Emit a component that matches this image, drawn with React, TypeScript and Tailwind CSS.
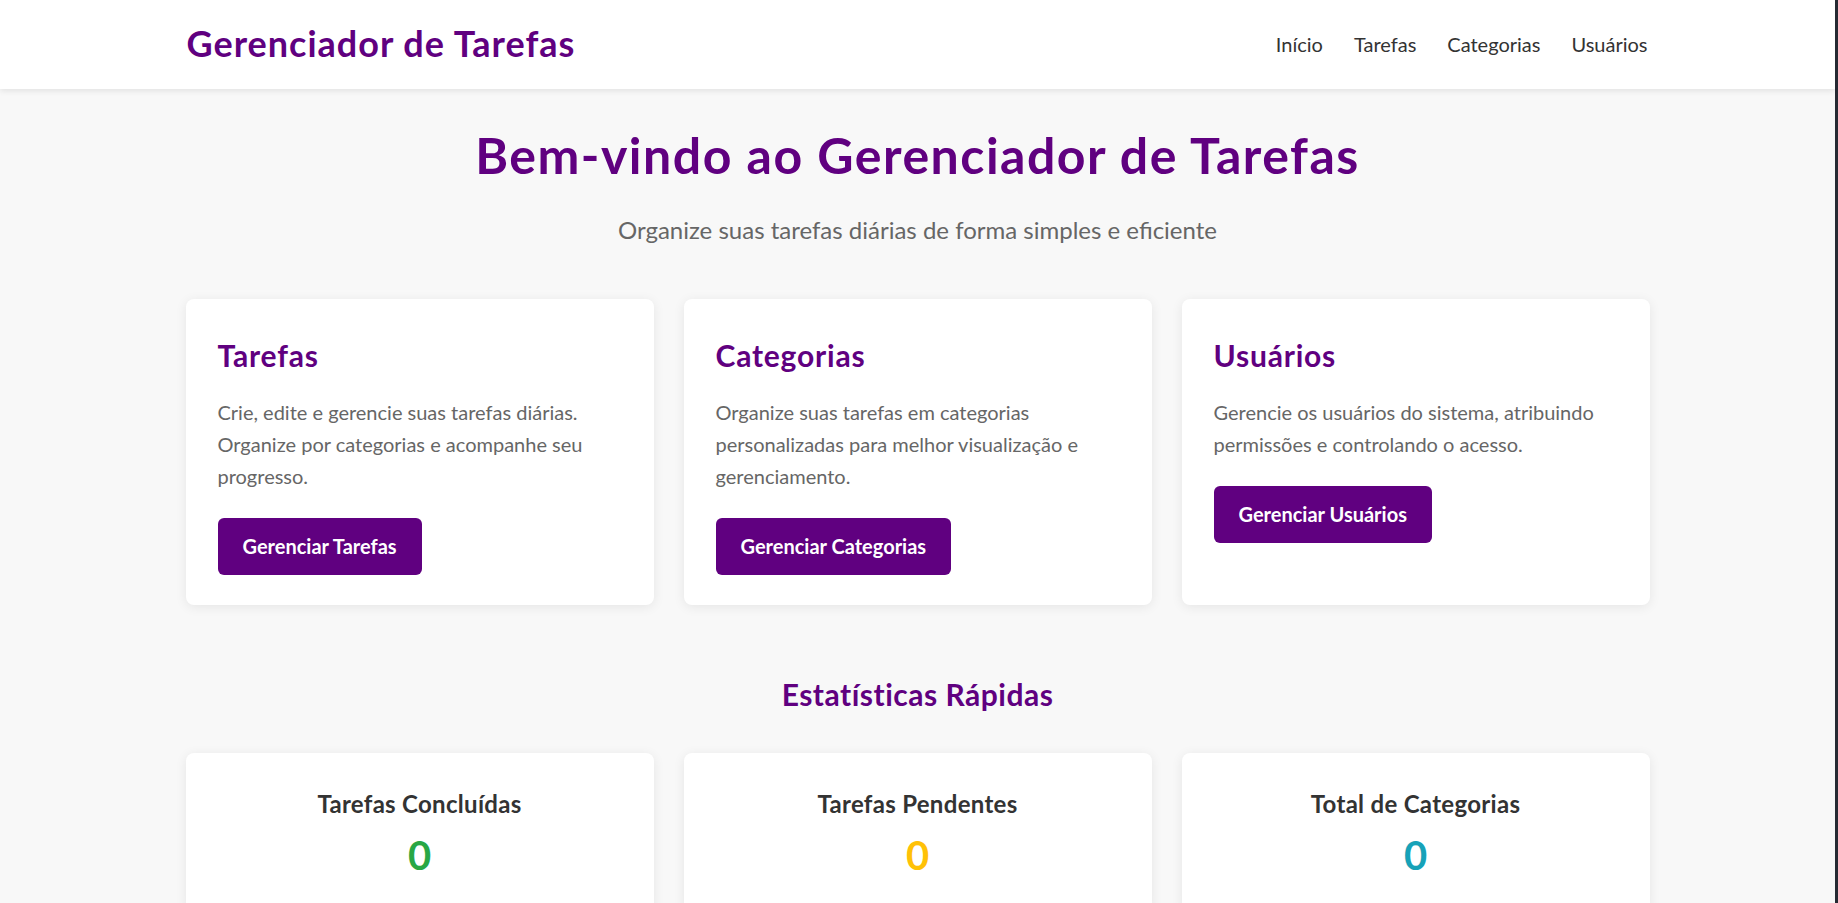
import React from "react";

const features = [
  {
    title: "Tarefas",
    desc: "Crie, edite e gerencie suas tarefas diárias. Organize por categorias e acompanhe seu progresso.",
    btn: "Gerenciar Tarefas",
  },
  {
    title: "Categorias",
    desc: "Organize suas tarefas em categorias personalizadas para melhor visualização e gerenciamento.",
    btn: "Gerenciar Categorias",
  },
  {
    title: "Usuários",
    desc: "Gerencie os usuários do sistema, atribuindo permissões e controlando o acesso.",
    btn: "Gerenciar Usuários",
  },
];

export default function App() {
  return (
    <div
      className="h-[903px] overflow-hidden bg-[#f8f8f8] border-r-[3px] border-[#262a33]"
      style={{ fontFamily: "Lato, 'Open Sans', 'Noto Sans', sans-serif" }}
    >
      <header className="h-[89px] bg-white shadow-[0_2px_6px_rgba(0,0,0,0.09)] relative z-10">
        <div className="w-[1464px] mx-auto h-full flex items-center justify-between">
          <div className="text-[36px] font-bold text-[#600080] leading-[44px] tracking-[1px] pl-[1px] pb-[4px]">
            Gerenciador de Tarefas
          </div>
          <nav className="flex items-center gap-[31px] text-[20px] text-[#333] leading-[28px] pr-[2px] pb-[2px]">
            <span>Início</span>
            <span>Tarefas</span>
            <span>Categorias</span>
            <span>Usuários</span>
          </nav>
        </div>
      </header>

      <main className="w-[1464px] mx-auto">
        <h1 className="mt-[36px] text-center text-[50px] leading-[60px] font-bold tracking-[1.5px] text-[#600080]">
          Bem-vindo ao Gerenciador de Tarefas
        </h1>
        <p className="mt-[29px] text-center text-[24px] leading-[32px] text-[#666]">
          Organize suas tarefas diárias de forma simples e eficiente
        </p>

        <div className="mt-[53px] grid grid-cols-3 gap-[30px]">
          {features.map((f) => (
            <div
              key={f.title}
              className="bg-white rounded-[8px] shadow-[0_2px_12px_rgba(0,0,0,0.08)] px-[32px] pt-[32px] pb-[30px] flex flex-col items-start"
            >
              <h2 className="text-[30px] leading-[48px] font-bold tracking-[0.8px] text-[#600080]">{f.title}</h2>
              <p className="mt-[17px] text-[20px] leading-[32px] text-[#666]">{f.desc}</p>
              <button className="mt-[26px] bg-[#600080] text-white rounded-[6px] px-[25px] py-[16px] text-[20px] leading-[25px] font-bold">
                {f.btn}
              </button>
            </div>
          ))}
        </div>

        <h2 className="mt-[70px] text-center text-[30px] leading-[38px] font-bold tracking-[0.5px] text-[#600080]">
          Estatísticas Rápidas
        </h2>

        <div className="mt-[40px] grid grid-cols-3 gap-[30px]">
          {[
            { label: "Tarefas Concluídas", value: "0", color: "text-[#28a745]" },
            { label: "Tarefas Pendentes", value: "0", color: "text-[#ffc107]" },
            { label: "Total de Categorias", value: "0", color: "text-[#17a2b8]" },
          ].map((s) => (
            <div
              key={s.label}
              className="bg-white rounded-[8px] shadow-[0_2px_12px_rgba(0,0,0,0.08)] px-[32px] pt-[32px] pb-[32px] text-center"
            >
              <h3 className="text-[24px] leading-[38px] font-bold tracking-[0.3px] text-[#333]">{s.label}</h3>
              <div className={`mt-[8px] text-[40px] leading-[48px] font-bold ${s.color}`}>{s.value}</div>
            </div>
          ))}
        </div>
      </main>
    </div>
  );
}
